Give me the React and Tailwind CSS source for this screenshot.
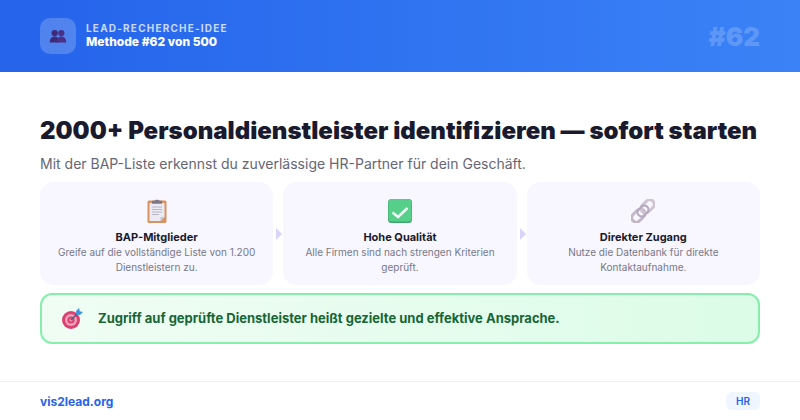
const cards = [
  { id: "clip", title: "BAP-Mitglieder", lines: ["Greife auf die vollständige Liste von 1.200", "Dienstleistern zu."] },
  { id: "check", title: "Hohe Qualität", lines: ["Alle Firmen sind nach strengen Kriterien", "geprüft."] },
  { id: "link", title: "Direkter Zugang", lines: ["Nutze die Datenbank für direkte", "Kontaktaufnahme."] },
];

function People() {
  return (
    <svg width="18" height="14" viewBox="0 0 20 16">
      <circle cx="6.200" cy="4.600" r="3.600" fill="#3f2a78" />
      <circle cx="13.800" cy="4.600" r="3.600" fill="#4a3188" />
      <path d="M0.500 15.500c0-4.500 2.200-7 5.700-7s5.300 2.500 5.300 7z" fill="#3f2a78" />
      <path d="M8.500 15.500c0-4.500 2-7 5.300-7s5.700 2.500 5.700 7z" fill="#4a3188" />
    </svg>
  );
}

function Clip() {
  return (
    <svg width="20" height="24" viewBox="0 0 20 24">
      <rect x="0.500" y="1.500" width="19" height="22.500" rx="1.500" fill="#d9925f" />
      <path d="M2.500 4h15v14l-4 4h-11z" fill="#ebe9f2" />
      <path d="M13.500 22l4-4h-4z" fill="#c9c5d6" />
      <path d="M5 1.800h2.500C8 .4 12 .4 12.500 1.800H15v3H5z" fill="#7d7889" />
      <path d="M5 8h10M5 10.500h10M5 13h10M5 15.500h7" stroke="#b9b6c6" strokeWidth="1" />
    </svg>
  );
}

function Check() {
  return (
    <svg width="24" height="24" viewBox="0 0 24 24">
      <rect x="0" y="0" width="24" height="24" rx="3.500" fill="#3fa76c" />
      <rect x="0.500" y="0" width="23" height="22.500" rx="3.500" fill="#55cf89" />
      <path d="M4.500 13.500L10 18l9.500-9" fill="none" stroke="#f4fbf6" strokeWidth="2.600" />
    </svg>
  );
}

function ChainLink() {
  return (
    <svg width="24" height="24" viewBox="0 0 24 24">
      <g transform="rotate(-45 12 12)" fill="none" stroke="#c3b6c9" strokeWidth="3">
        <rect x="-2" y="7.500" width="15" height="9" rx="4.500" />
        <rect x="11" y="7.500" width="15" height="9" rx="4.500" stroke="#cfc3d4" />
        <rect x="6" y="8" width="12" height="8" rx="4" stroke="#b4a6bc" strokeWidth="2" />
      </g>
    </svg>
  );
}

function Target() {
  return (
    <svg width="21" height="21" viewBox="0 0 21 21">
      <circle cx="9" cy="12" r="9" fill="#dc3f72" />
      <circle cx="9" cy="12" r="6" fill="#f0a3bb" />
      <circle cx="9" cy="12" r="3.600" fill="#dc3f72" />
      <circle cx="9" cy="12" r="1.500" fill="#f0a3bb" />
      <path d="M9 12L17 4" stroke="#4a5a78" strokeWidth="1.500" />
      <path d="M14 3l3-3 .8 3.200L21 4l-3 3-3.800-.4z" fill="#3c96e0" />
    </svg>
  );
}

const icons = { clip: Clip, check: Check, link: ChainLink };

export default function App() {
  return (
    <div className="flex h-[420px] w-[800px] flex-col overflow-hidden bg-white font-['Inter',sans-serif]">
      <header className="flex h-[72px] shrink-0 items-center justify-between bg-gradient-to-r from-[#2563eb] to-[#3b82f6] px-10">
        <div className="flex items-center gap-[10px]">
          <div className="flex h-9 w-9 items-center justify-center rounded-[10px] bg-white/20">
            <People />
          </div>
          <div>
            <div className="text-[10px] leading-[12px] font-bold tracking-[1.2px] text-white/75">LEAD-RECHERCHE-IDEE</div>
            <div className="text-[12px] leading-[16px] font-extrabold text-white">Methode #62 von 500</div>
          </div>
        </div>
        <div className="text-[26px] font-black text-white/20">#62</div>
      </header>

      <main className="flex flex-1 flex-col px-10 pt-[43px]">
        <h1 className="text-[24px] leading-[32px] font-black whitespace-nowrap text-[#1a1a2e]">
          2000+ Personaldienstleister identifizieren — sofort starten
        </h1>
        <p className="mt-[7px] text-[14px] leading-[20px] text-[#666677]">
          Mit der BAP-Liste erkennst du zuverlässige HR-Partner für dein Geschäft.
        </p>
        <div className="mt-2 flex gap-[10px]">
          {cards.map((c, i) => {
            const Icon = icons[c.id];
            return (
              <div key={c.id} className="relative flex h-[103px] flex-1 flex-col items-center rounded-[14px] bg-[#f8f7ff] pt-[17px]">
                <div className="flex h-6 items-center justify-center"><Icon /></div>
                <div className="mt-[6px] text-[11px] leading-[16px] font-bold text-[#1a1a2e]">{c.title}</div>
                <div className="text-center text-[10px] leading-[14.500px] text-[#777788]">
                  {c.lines.map((l) => <div key={l}>{l}</div>)}
                </div>
                {i < 2 && (
                  <div className="absolute top-[46px] right-[-9px] h-0 w-0 border-y-[6px] border-l-[6px] border-y-transparent border-l-[#d9d4fa]" />
                )}
              </div>
            );
          })}
        </div>
        <div className="mt-2 flex h-[51px] items-center gap-[15px] rounded-[12px] border-2 border-[#86efac] bg-gradient-to-r from-[#f0fdf4] to-[#dcfce7] pl-[20px]">
          <Target />
          <div className="text-[13px] font-bold text-[#166534]">
            Zugriff auf geprüfte Dienstleister heißt gezielte und effektive Ansprache.
          </div>
        </div>
      </main>

      <footer className="flex h-[39px] shrink-0 items-center justify-between border-t border-[#f0f0f0] px-10">
        <div className="pt-[2px] text-[12px] font-bold text-[#2563eb]">vis2lead.org</div>
        <div className="rounded-md bg-[#eff6ff] px-[10px] py-[2px] text-[10px] leading-[14px] font-semibold text-[#2563eb]">HR</div>
      </footer>
    </div>
  );
}
